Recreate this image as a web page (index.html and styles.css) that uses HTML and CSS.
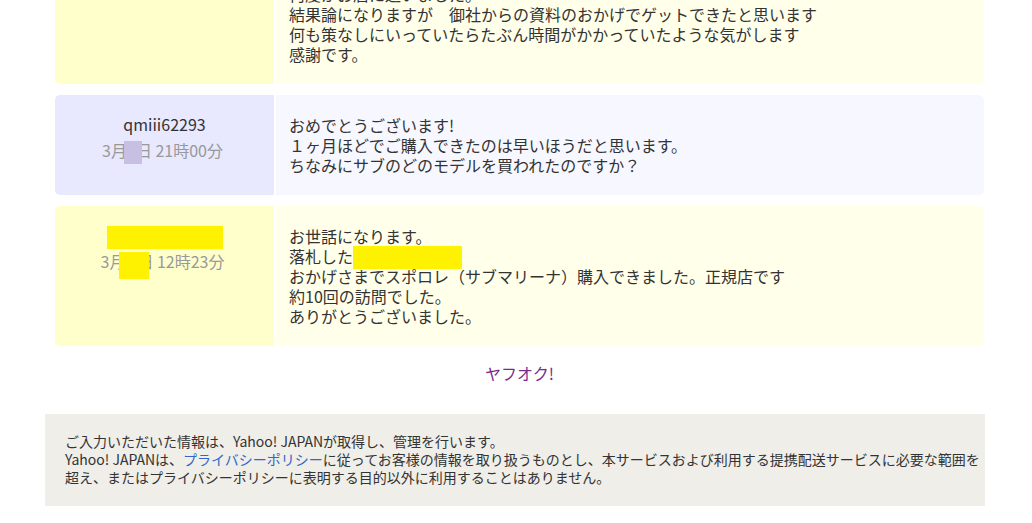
FILE: index.html
```html
<!DOCTYPE html>
<html lang="ja">
<head>
    <meta charset="UTF-8">
    <meta name="viewport" content="width=device-width, initial-scale=1.0">
    <title>取引ナビ</title>
    <link rel="stylesheet" href="styles.css">
</head>
<body>
    <div class="wrap">
        <div class="messages">
            <div class="msg msg-yellow first">
                <div class="msg-from"></div>
                <div class="msg-body">
                    何度かお店に通いました。<br>
                    結果論になりますが　御社からの資料のおかげでゲットできたと思います<br>
                    何も策なしにいっていたらたぶん時間がかかっていたような気がします<br>
                    感謝です。
                </div>
            </div>

            <div class="msg msg-blue">
                <div class="msg-from">
                    <p class="name">qmiii62293</p>
                    <p class="date">3月<span class="mask mask-blue"></span>日 21時00分</p>
                </div>
                <div class="msg-body">
                    おめでとうございます!<br>
                    １ヶ月ほどでご購入できたのは早いほうだと思います。<br>
                    ちなみにサブのどのモデルを買われたのですか？
                </div>
            </div>

            <div class="msg msg-yellow">
                <div class="msg-from">
                    <p class="name"><span class="mask mask-name"></span></p>
                    <p class="date">3月<span class="mask mask-date"></span>日 12時23分</p>
                </div>
                <div class="msg-body">
                    お世話になります。<br>
                    落札した<span class="mask mask-text"></span><br>
                    おかげさまでスポロレ（サブマリーナ）購入できました。正規店です<br>
                    約10回の訪問でした。<br>
                    ありがとうございました。
                </div>
            </div>

            <p class="brand">ヤフオク!</p>
        </div>

        <div class="notice">
            <p>
                ご入力いただいた情報は、Yahoo! JAPANが取得し、管理を行います。<br>
                Yahoo! JAPANは、<a href="#">プライバシーポリシー</a>に従ってお客様の情報を取り扱うものとし、本サービスおよび利用する提携配送サービスに必要な範囲を<br>
                超え、またはプライバシーポリシーに表明する目的以外に利用することはありません。
            </p>
        </div>
    </div>
</body>
</html>
```

FILE: styles.css
```css
body {
  margin: 0;
  padding: 0;
  background: #fff;
  color: #333;
  font-family: "Noto Sans CJK JP", "Noto Sans", sans-serif;
  overflow: hidden;
}
.wrap {
  width: 940px;
  margin-left: 45px;
}
.messages {
  display: flex;
  flex-direction: column;
  gap: 11px;
  padding-left: 10px;
  padding-right: 1px;
}
.msg {
  display: flex;
  gap: 2px;
}
.msg.first {
  margin-top: -36px;
}
.msg-from {
  width: 219px;
  flex-shrink: 0;
  padding: 16px 0;
  text-align: center;
  border-radius: 5px 0 0 5px;
  font-size: 16px;
  line-height: 26px;
}
.msg-from p {
  margin: 0;
}
.msg-from .date {
  color: #999;
  padding-right: 4px;
}
.msg-body {
  flex: 1;
  padding: 20px 14px 20px 13px;
  font-size: 16px;
  line-height: 20px;
  border-radius: 0 5px 5px 0;
}
.msg-yellow .msg-from {
  background: #ffffcc;
}
.msg-yellow .msg-body {
  background: #ffffea;
}
.msg-blue .msg-from {
  background: #e8e8ff;
}
.msg-blue .msg-body {
  background: #f7f7ff;
}
.mask {
  display: inline-block;
  vertical-align: middle;
  position: relative;
}
.mask-blue {
  width: 18px;
  height: 23px;
  margin: -6px -6px -6px -3px;
  background: #c8c0e2;
}
.mask-name {
  width: 116px;
  height: 23px;
  margin: -6px 0;
  background: #fff200;
}
.mask-date {
  width: 30px;
  height: 27px;
  margin: -8px -12px -8px -6px;
  top: 2px;
  background: #fff200;
}
.mask-text {
  width: 109px;
  height: 23px;
  margin: -6px 0;
  top: -1px;
  background: #fff200;
}
.brand {
  margin: 6px 0 31px;
  text-align: center;
  color: #7b2b8e;
  font-size: 16px;
  line-height: 20px;
}
.notice {
  background: #efeee9;
  padding: 18px 20px 20px;
}
.notice p {
  margin: 0;
  font-size: 14px;
  line-height: 18px;
  white-space: nowrap;
}
.notice a {
  color: #2f68c8;
  text-decoration: none;
}
```
